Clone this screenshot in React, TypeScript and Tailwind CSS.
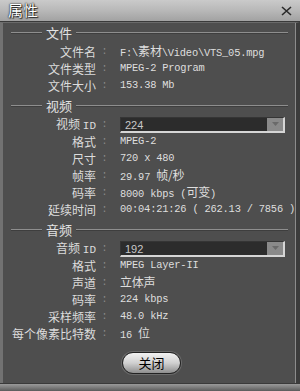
import React from "react";

const cjk = { fontFamily: '"Noto Sans CJK SC", "Noto Sans", sans-serif' };

function Zh({ children }: { children: React.ReactNode }) {
  return <span className="text-[12px]" style={cjk}>{children}</span>;
}

function Section({ title, mt }: { title: string; mt: string }) {
  return (
    <div className={`flex h-[20px] items-center ${mt}`}>
      <div className="ml-[8px] w-[31px] h-[2px] border-t border-[#8e8e8e] border-b border-b-[#3e3e3e]" />
      <span className="px-[4px] text-[13px] text-[#e2e2e2]" style={cjk}>{title}</span>
      <div className="mr-[7px] flex-1 h-[2px] border-t border-[#8e8e8e] border-b border-b-[#3e3e3e]" />
    </div>
  );
}

function Row({ label, children }: { label: string; children: React.ReactNode }) {
  return (
    <div className="flex h-[17px] items-center">
      <span className="w-[93px] text-right text-[12px] text-[#dcdcdc] whitespace-nowrap" style={cjk}>{label}</span>
      <span className="w-[17px] text-center text-[10px] text-[#8a8a8a] font-['Liberation_Mono',monospace]">:</span>
      <span className="ml-[7px] whitespace-nowrap text-[10.4px] text-[#dedede] tracking-[-0.2px] font-['Liberation_Mono','Noto_Sans_CJK_SC',monospace]">
        {children}
      </span>
    </div>
  );
}

function Dropdown({ value }: { value: string }) {
  return (
    <div className="ml-[7px] flex h-[16px] w-[165px] border-t border-l border-[#353535] border-r-2 border-b-2 border-r-[#d6d6d6] border-b-[#d6d6d6] bg-[#2c2c2c]">
      <span className="flex-1 pl-[4px] text-[11px] leading-[14px] text-[#c8c8c8] font-['Liberation_Sans',sans-serif]">{value}</span>
      <div className="flex w-[16px] items-center justify-center bg-[#8a8a8a]">
        <svg width="7" height="4" viewBox="0 0 7 4"><path d="M0 0h7L3.5 4z" fill="#6a6a6a" /></svg>
      </div>
    </div>
  );
}

function DropRow({ label, value }: { label: string; value: string }) {
  return (
    <div className="flex h-[17px] items-center">
      <span className="w-[93px] text-right text-[12px] text-[#dcdcdc] whitespace-nowrap" style={cjk}>
        {label.split(" ")[0]} <span className="font-['Liberation_Mono',monospace] text-[11px]">ID</span>
      </span>
      <span className="w-[17px] text-center text-[10px] text-[#8a8a8a] font-['Liberation_Mono',monospace]">:</span>
      <Dropdown value={value} />
    </div>
  );
}

export default function App() {
  return (
    <div className="flex h-[391px] w-[300px] flex-col bg-[#4e4e4e] overflow-hidden">
      <div className="flex h-[22px] items-center justify-between bg-gradient-to-b from-[#cacaca] via-[#b8b8b8] to-[#a2a2a2] border-b border-[#3a3a3a] pl-[8px] pr-[8px]">
        <span className="text-[15px] text-white [text-shadow:0_0_1px_#111,0_0_2px_#222,1px_1px_1px_#333]" style={cjk}>属性</span>
        <svg width="11" height="10" viewBox="0 0 11 10">
          <path d="M1 1l9 8M10 1l-9 8" stroke="#2a2a2a" strokeWidth="1.6" />
        </svg>
      </div>
      <div className="flex flex-1 flex-col border-l-[3px] border-l-[#727272] border-r-[4px] border-r-[#3c3c3c] border-t border-t-[#6a6a6a]">
        <div className="flex flex-1 flex-col border-r border-r-[#8c8c8c] ml-[-3px] pl-[3px]">
          <Section title="文件" mt="mt-0" />
          <Row label="文件名">F:\<Zh>素材</Zh>\Video\VTS_05.mpg</Row>
          <Row label="文件类型">MPEG-2 Program</Row>
          <Row label="文件大小">153.38 Mb</Row>

          <Section title="视频" mt="mt-[2px]" />
          <DropRow label="视频 ID" value="224" />
          <Row label="格式">MPEG-2</Row>
          <Row label="尺寸">720 x 480</Row>
          <Row label="帧率">29.97 <Zh>帧/秒</Zh></Row>
          <Row label="码率">8000 kbps (<Zh>可变</Zh>)</Row>
          <Row label="延续时间">00:04:21:26 ( 262.13 / 7856 )</Row>

          <Section title="音频" mt="mt-[2px]" />
          <DropRow label="音频 ID" value="192" />
          <Row label="格式">MPEG Layer-II</Row>
          <Row label="声道"><Zh>立体声</Zh></Row>
          <Row label="码率">224 kbps</Row>
          <Row label="采样频率">48.0 kHz</Row>
          <Row label="每个像素比特数">16 <Zh>位</Zh></Row>

          <div className="mt-[10px] flex justify-center pl-[5px]">
            <button className="h-[22px] w-[59px] rounded-full border border-[#222] bg-gradient-to-b from-[#f2f2f2] via-[#d0d0d0] to-[#8e8e8e] text-[13px] text-black shadow-[0_0_0_1px_#6a6a6a]" style={cjk}>
              关闭
            </button>
          </div>
        </div>
      </div>
      <div className="h-[8px] bg-gradient-to-b from-[#9a9a9a] via-[#7c7c7c] to-[#5c5c5c] border-t border-[#3a3a3a]" />
    </div>
  );
}
